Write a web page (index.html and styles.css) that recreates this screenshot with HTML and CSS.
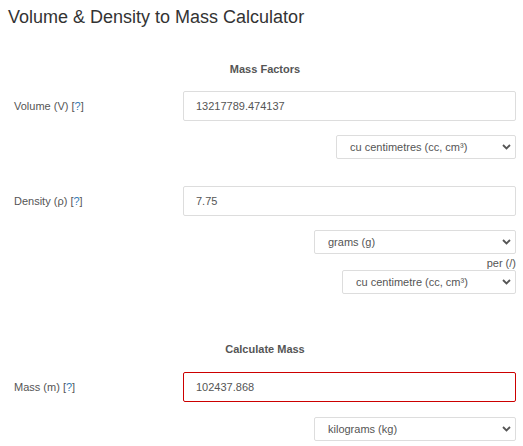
FILE: index.html
```html
<!DOCTYPE html>
<html>
<head>
<meta charset="utf-8">
<link rel="stylesheet" href="styles.css">
</head>
<body>
<h1 class="title">Volume &amp; Density to Mass Calculator</h1>
<div class="calc">
  <div class="section-head first">Mass Factors</div>

  <div class="row row-volume">
    <label class="label">Volume (V) [<a class="help" href="#">?</a>]</label>
    <input class="field" type="text" value="13217789.474137">
  </div>
  <div class="unit-row gap14">
    <div class="select-wrap w180">
      <select class="unit"><option>cu centimetres (cc, cm³)</option></select>
      <svg class="chev" width="9" height="6" viewBox="0 0 9 6"><path d="M1 1 L4.5 4.5 L8 1" fill="none" stroke="#555" stroke-width="1.8"/></svg>
    </div>
  </div>

  <div class="row row-density">
    <label class="label">Density (ρ) [<a class="help" href="#">?</a>]</label>
    <input class="field" type="text" value="7.75">
  </div>
  <div class="unit-row gap14">
    <div class="select-wrap w202">
      <select class="unit"><option>grams (g)</option></select>
      <svg class="chev" width="9" height="6" viewBox="0 0 9 6"><path d="M1 1 L4.5 4.5 L8 1" fill="none" stroke="#555" stroke-width="1.8"/></svg>
    </div>
  </div>
  <div class="per">per (/)</div>
  <div class="unit-row gap0">
    <div class="select-wrap w174">
      <select class="unit"><option>cu centimetre (cc, cm³)</option></select>
      <svg class="chev" width="9" height="6" viewBox="0 0 9 6"><path d="M1 1 L4.5 4.5 L8 1" fill="none" stroke="#555" stroke-width="1.8"/></svg>
    </div>
  </div>

  <div class="section-head second">Calculate Mass</div>
  <div class="row row-mass">
    <label class="label">Mass (m) [<a class="help" href="#">?</a>]</label>
    <input class="field result" type="text" value="102437.868">
  </div>
  <div class="unit-row gap15">
    <div class="select-wrap w202">
      <select class="unit"><option>kilograms (kg)</option></select>
      <svg class="chev" width="9" height="6" viewBox="0 0 9 6"><path d="M1 1 L4.5 4.5 L8 1" fill="none" stroke="#555" stroke-width="1.8"/></svg>
    </div>
  </div>
</div>
</body>
</html>
```

FILE: styles.css
```css
html, body {
  margin: 0;
  padding: 0;
  background: #fff;
}
body {
  font-family: "Liberation Sans", Arial, sans-serif;
  color: #555;
}
.title {
  margin: 0;
  padding: 7px 0 0 8px;
  font-size: 18px;
  line-height: 20px;
  font-weight: normal;
  color: #333;
}
.calc {
  display: flex;
  flex-direction: column;
  padding: 0 7px 0 14px;
}
.section-head {
  font-size: 11px;
  line-height: 13px;
  font-weight: bold;
  color: #555;
  text-align: center;
}
.section-head.first { margin-top: 36px; }
.section-head.second { margin-top: 49px; }
.row {
  display: flex;
  align-items: center;
}
.row-volume { margin-top: 15px; }
.row-density { margin-top: 27px; }
.row-mass { margin-top: 16px; }
.label {
  width: 169px;
  flex: none;
  font-size: 11px;
  color: #555;
}
.help {
  color: #337ab7;
  text-decoration: none;
}
.field {
  flex: 1;
  min-width: 0;
  box-sizing: border-box;
  height: 30px;
  margin: 0;
  padding: 0 12px;
  border: 1px solid #ddd;
  border-radius: 2px;
  font-family: "Liberation Sans", Arial, sans-serif;
  font-size: 11px;
  color: #555;
  background: #fff;
  outline: none;
}
.field.result {
  border-color: #cc0000;
}
.unit-row {
  display: flex;
  justify-content: flex-end;
}
.gap14 { margin-top: 14px; }
.gap15 { margin-top: 15px; }
.gap0 { margin-top: 0; }
.select-wrap {
  position: relative;
  height: 24px;
}
.w180 { width: 180px; }
.w202 { width: 202px; }
.w174 { width: 174px; }
.unit {
  appearance: none;
  -webkit-appearance: none;
  box-sizing: border-box;
  width: 100%;
  height: 24px;
  margin: 0;
  padding: 0 20px 0 13px;
  border: 1px solid #ddd;
  border-radius: 2px;
  background: #fff;
  font-family: "Liberation Sans", Arial, sans-serif;
  font-size: 11px;
  color: #555;
  outline: none;
}
.chev {
  position: absolute;
  right: 5px;
  top: 9px;
  pointer-events: none;
}
.per {
  margin-top: 2px;
  font-size: 11px;
  line-height: 14px;
  text-align: right;
  color: #555;
}
```
